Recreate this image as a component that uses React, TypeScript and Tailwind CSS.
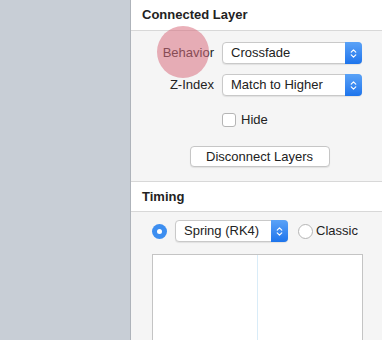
import { ChevronsUpDown } from "lucide-react";

function Select({ value, className }: { value: string; className: string }) {
  return (
    <div
      className={`flex h-[22px] shrink-0 items-stretch rounded-[4px] border border-[#c9c9c9] bg-white shadow-[0_1px_1px_rgba(0,0,0,0.08)] ${className}`}
    >
      <span className="flex-1 pl-[8px] text-[13px] leading-[20px] text-[#222]">{value}</span>
      <span className="-my-px -mr-px flex w-[17px] items-center justify-center rounded-r-[4px] bg-gradient-to-b from-[#5aa2f7] to-[#1c74ec]">
        <ChevronsUpDown className="h-[11px] w-[11px] text-white" strokeWidth={2.5} />
      </span>
    </div>
  );
}

export default function App() {
  return (
    <div className="flex h-[340px] w-[382px] overflow-hidden bg-[#c8ced6] font-['Liberation_Sans',sans-serif]">
      <div className="w-[130px] shrink-0" />
      <div className="relative flex flex-1 flex-col border-l border-[#aeb3ba] bg-[#f5f5f5]">
        <div className="flex h-[31px] shrink-0 items-center border-b border-[#d8d8d8] bg-white pl-[11px] text-[13px] font-bold text-[#222]">
          Connected Layer
        </div>
        <div className="flex shrink-0 flex-col pt-[11px]">
          <div className="flex h-[22px] items-center">
            <span className="w-[83px] text-right text-[13px] text-[#222]">Behavior</span>
            <Select value="Crossfade" className="ml-[8px] w-[140px]" />
          </div>
          <div className="mt-[10px] flex h-[22px] items-center">
            <span className="w-[83px] text-right text-[13px] text-[#222]">Z-Index</span>
            <Select value="Match to Higher" className="ml-[8px] w-[140px]" />
          </div>
          <div className="mt-[17px] flex h-[14px] items-center pl-[91px]">
            <span className="h-[14px] w-[14px] rounded-[3px] border border-[#b5b5b5] bg-white" />
            <span className="ml-[5px] text-[13px] text-[#222]">Hide</span>
          </div>
          <div className="mt-[19px] flex justify-center pl-[6px]">
            <div className="flex h-[21px] w-[140px] items-center justify-center rounded-[4px] border border-[#c6c6c6] bg-white text-[13px] text-[#222] shadow-[0_1px_1px_rgba(0,0,0,0.08)]">
              Disconnect Layers
            </div>
          </div>
        </div>
        <div className="mt-[14px] flex h-[31px] shrink-0 items-center border-y border-[#d8d8d8] bg-white pl-[11px] text-[13px] font-bold text-[#222]">
          Timing
        </div>
        <div className="flex h-[30px] shrink-0 items-center pl-[21px] pt-[8px]">
          <span className="flex h-[15px] w-[15px] items-center justify-center rounded-full bg-[#3d8ef0]">
            <span className="h-[5px] w-[5px] rounded-full bg-white" />
          </span>
          <Select value="Spring (RK4)" className="ml-[8px] w-[113px]" />
          <span className="ml-[10px] h-[15px] w-[15px] rounded-full border border-[#b5b5b5] bg-white" />
          <span className="ml-[3px] text-[13px] text-[#222]">Classic</span>
        </div>
        <div className="ml-[21px] mt-[12px] flex h-[120px] w-[211px] shrink-0 border border-[#c4c4c4] bg-white">
          <div className="w-[105px] border-r border-[#d9ecf8]" />
        </div>
        <div className="pointer-events-none absolute left-[26px] top-[26px] h-[52px] w-[52px] rounded-full bg-[#d9707f]/55" />
      </div>
    </div>
  );
}
